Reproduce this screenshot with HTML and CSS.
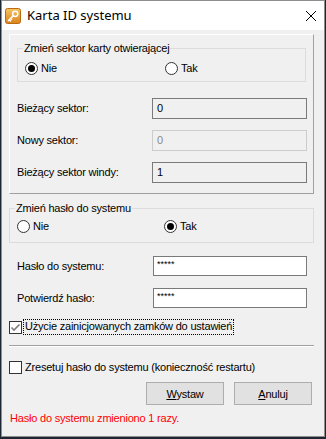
FILE: index.html
```html
<!DOCTYPE html>
<html lang="pl">
<head>
  <meta charset="UTF-8" />
  <title>Karta ID systemu</title>
  <link rel="stylesheet" href="styles.css">
</head>
<body>
  <div class="window">
    <div class="titlebar">
      <svg class="app-icon" viewBox="0 0 16 16" width="16" height="16">
        <defs>
          <linearGradient id="keybg" x1="0" y1="0" x2="0" y2="1">
            <stop offset="0" stop-color="#f8c462"/>
            <stop offset="1" stop-color="#d9821c"/>
          </linearGradient>
        </defs>
        <rect x="0.5" y="0.5" width="15" height="15" rx="2" fill="url(#keybg)" stroke="#b96b12"/>
        <circle cx="10.2" cy="5.8" r="2.6" fill="none" stroke="#fff" stroke-width="1.5"/>
        <path d="M8.3 7.7 L3 13 M4.2 11.8 L5.8 13.4 M5.7 10.3 L7 11.6" fill="none" stroke="#fff" stroke-width="1.5"/>
      </svg>
      <span class="title">Karta ID systemu</span>
      <svg class="close" viewBox="0 0 10 10" width="10" height="10">
        <path d="M0 0 L10 10 M10 0 L0 10" stroke="#000" stroke-width="1" fill="none"/>
      </svg>
    </div>

    <div class="client">
      <div class="panel">
        <fieldset class="group group-sector">
          <legend>Zmień sektor karty otwierającej</legend>
          <div class="radios radios-sector">
            <label class="radio"><span class="dot checked"></span>Nie</label>
            <label class="radio"><span class="dot"></span>Tak</label>
          </div>
        </fieldset>

        <div class="fields fields-sector">
          <span class="label">Bieżący sektor:</span>
          <span class="box">0</span>
          <span class="label">Nowy sektor:</span>
          <span class="box disabled">0</span>
          <span class="label">Bieżący sektor windy:</span>
          <span class="box">1</span>
        </div>
      </div>

      <fieldset class="group group-pass">
        <legend>Zmień hasło do systemu</legend>
        <div class="radios radios-pass">
          <label class="radio"><span class="dot"></span>Nie</label>
          <label class="radio"><span class="dot checked"></span>Tak</label>
        </div>
      </fieldset>

      <div class="fields fields-pass">
        <span class="label">Hasło do systemu:</span>
        <span class="box edit">*****</span>
        <span class="label">Potwierdź hasło:</span>
        <span class="box edit">*****</span>
      </div>

      <label class="check check-locks">
        <span class="tick">
          <svg viewBox="0 0 11 11" width="11" height="11">
            <path d="M1.5 5.5 L4 8 L9.5 2.5" fill="none" stroke="#7d7d7d" stroke-width="1.6"/>
          </svg>
        </span>
        <span class="focus">Użycie zainicjowanych zamków do ustawień</span>
      </label>

      <div class="separator"></div>

      <label class="check check-reset">
        <span class="tick"></span>
        <span>Zresetuj hasło do systemu (konieczność restartu)</span>
      </label>

      <div class="buttons">
        <button class="btn"><u>W</u>ystaw</button>
        <button class="btn"><u>A</u>nuluj</button>
      </div>

      <div class="status">Hasło do systemu zmieniono 1 razy.</div>
    </div>
  </div>
</body>
</html>
```

FILE: styles.css
```css
body {
  margin: 0;
  background-color: #1d2733;
  font-family: "Liberation Sans", Arial, sans-serif;
  font-size: 11px;
  line-height: 13px;
  letter-spacing: -0.2px;
  color: #000;
}
.window {
  margin-left: 1px;
  width: 322px;
  height: 435px;
  border: 1px solid #8e8e8e;
  background-color: #f0f0f0;
}
.titlebar {
  height: 29px;
  background-color: #fff;
  display: flex;
  align-items: center;
  padding-left: 3px;
}
.app-icon {
  display: block;
}
.title {
  margin-left: 6px;
  font-family: "Noto Sans", "Open Sans", sans-serif;
  font-size: 13px;
  letter-spacing: 0;
}
.close {
  display: block;
  margin-left: auto;
  margin-right: 8px;
}
.client {
  padding: 4px 0 0 7px;
}
.panel {
  width: 303px;
  border: 1px solid;
  border-color: #fff #a0a0a0 #a0a0a0 #fff;
  padding-bottom: 10px;
}
.group {
  margin: 0;
  border: 1px solid #dcdcdc;
  padding: 0 7px;
  min-width: 0;
}
.group legend {
  padding: 0 1px;
  margin-left: -2px;
  line-height: 13px;
}
.group-sector {
  margin: 7px 0 0 7px;
  width: 273px;
  padding-bottom: 6px;
}
.group-sector .radios {
  margin-top: 7px;
  grid-template-columns: 140px auto;
}
.group-pass {
  margin-top: 8px;
  width: 289px;
  padding-bottom: 9px;
}
.group-pass .radios {
  margin-top: 5px;
  grid-template-columns: 147px auto;
}
.radios {
  display: grid;
}
.radio {
  display: flex;
  align-items: center;
  gap: 3px;
  height: 13px;
}
.dot {
  width: 13px;
  height: 13px;
  box-sizing: border-box;
  border: 1px solid #333;
  border-radius: 50%;
  background-color: #fff;
  display: flex;
  align-items: center;
  justify-content: center;
}
.dot.checked::after {
  content: "";
  width: 7px;
  height: 7px;
  border-radius: 50%;
  background-color: #000;
}
.fields {
  display: grid;
  align-items: center;
}
.fields-sector {
  margin-top: 16px;
  padding-left: 7px;
  grid-template-columns: 135px 155px;
  row-gap: 11px;
}
.fields-sector .box {
  height: 21px;
  line-height: 19px;
}
.fields-pass {
  margin-top: 13px;
  padding-left: 8px;
  grid-template-columns: 136px 154px;
  row-gap: 12px;
}
.box {
  box-sizing: border-box;
  border: 1px solid #7a7a7a;
  padding: 0 4px;
  background-color: #f0f0f0;
}
.box.disabled {
  border-color: #cccccc;
  color: #8a8a8a;
}
.box.edit {
  height: 20px;
  background-color: #fff;
  font-size: 9px;
  line-height: 12px;
  letter-spacing: 0;
  padding: 1px 3px;
}
.check {
  display: flex;
  align-items: center;
  height: 14px;
}
.tick {
  width: 13px;
  height: 13px;
  box-sizing: border-box;
  border: 1px solid #333;
  background-color: #fff;
  display: flex;
  align-items: center;
  justify-content: center;
  margin-right: 2px;
}
.tick svg {
  display: block;
}
.check-locks {
  margin-top: 12px;
}
.focus {
  outline: 1px dotted #000;
  outline-offset: 0;
  padding: 0 1px 1px 1px;
}
.check-reset {
  margin-top: 13px;
}
.check-reset .tick {
  margin-right: 3px;
}
.separator {
  width: 305px;
  margin-top: 11px;
  border-top: 1px solid #a0a0a0;
  border-bottom: 1px solid #fff;
}
.buttons {
  display: flex;
  justify-content: flex-end;
  gap: 10px;
  margin-top: 8px;
  padding-right: 12px;
}
.btn {
  width: 78px;
  height: 23px;
  border: 1px solid #adadad;
  background-color: #e1e1e1;
  font-family: "Liberation Sans", Arial, sans-serif;
  font-size: 11px;
  letter-spacing: -0.2px;
  padding: 0;
  color: #000;
}
.status {
  margin-top: 7px;
  padding-left: 1px;
  color: #ff0000;
}
```
